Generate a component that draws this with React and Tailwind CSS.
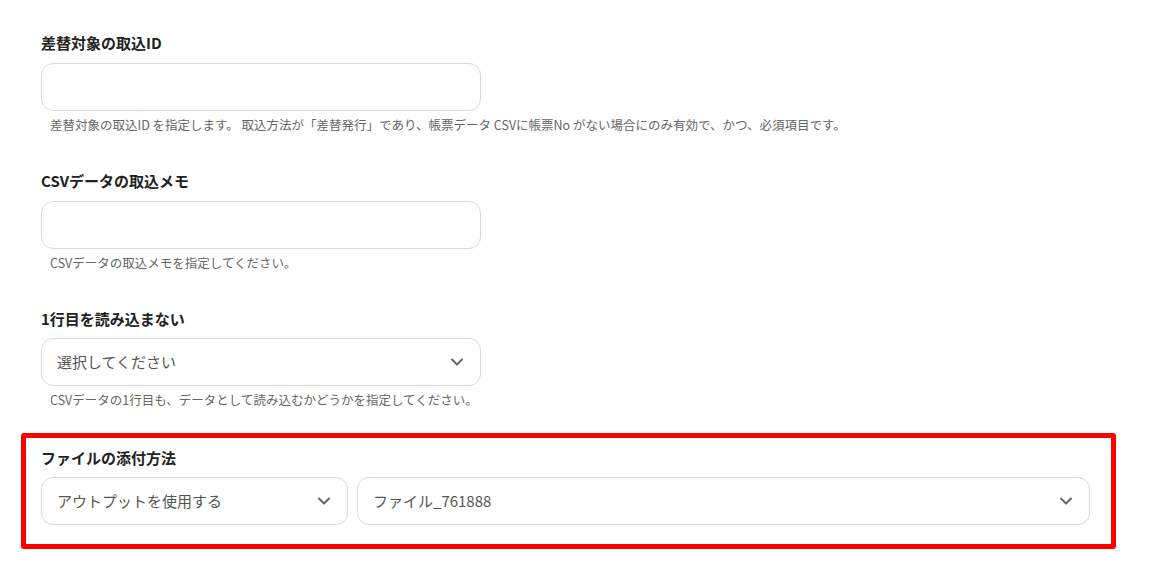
import React from 'react';
import { ChevronDown } from 'lucide-react';

const font = { fontFamily: '"Noto Sans CJK JP", "Noto Sans", sans-serif' };

function Label({ children }) {
  return <div className="text-[15px] leading-5 font-bold text-[#222]">{children}</div>;
}

function Help({ children }) {
  return <div className="mt-[6px] pl-[9px] text-[12.5px] leading-4 text-[#666]">{children}</div>;
}

function TextBox() {
  return <div className="mt-[10px] h-[48px] w-[440px] rounded-[12px] border border-[#d5dae1] bg-white" />;
}

function Select({ value, className }) {
  return (
    <div
      className={
        'flex h-[48px] items-center justify-between rounded-[12px] border border-[#d5dae1] bg-white pl-[15px] pr-[13px] ' +
        className
      }
    >
      <span className="text-[15px] text-[#555]">{value}</span>
      <ChevronDown size={20} strokeWidth={2.4} className="text-[#666]" />
    </div>
  );
}

export default function App() {
  return (
    <div className="min-h-[568px] w-[1163px] bg-white pt-[33px]" style={font}>
      <div className="pl-[41px]">
        {/* 差替対象 */}
        <Label>差替対象の取込ID</Label>
        <TextBox />
        <Help>差替対象の取込ID を指定します。 取込方法が「差替発行」であり、帳票データ CSVに帳票No がない場合にのみ有効で、かつ、必須項目です。</Help>

        <div className="mt-[38px]">
          <Label>CSVデータの取込メモ</Label>
          <TextBox />
          <Help>CSVデータの取込メモを指定してください。</Help>
        </div>

        <div className="mt-[38px]">
          <Label>1行目を読み込まない</Label>
          <Select value="選択してください" className="mt-[9px] w-[440px]" />
          <Help>CSVデータの1行目も、データとして読み込むかどうかを指定してください。</Help>
        </div>
      </div>

      {/* ファイルの添付方法 */}
      <div className="ml-[21px] mt-[25px] w-[1095px] rounded-[3px] border-[5px] border-[#ff0000] pb-[19px] pl-[15px] pr-[21px] pt-[10px]">
        <Label>ファイルの添付方法</Label>
        <div className="mt-[9px] flex gap-[9px]">
          <Select value="アウトプットを使用する" className="w-[307px]" />
          <Select value="ファイル_761888" className="flex-1" />
        </div>
      </div>
    </div>
  );
}
